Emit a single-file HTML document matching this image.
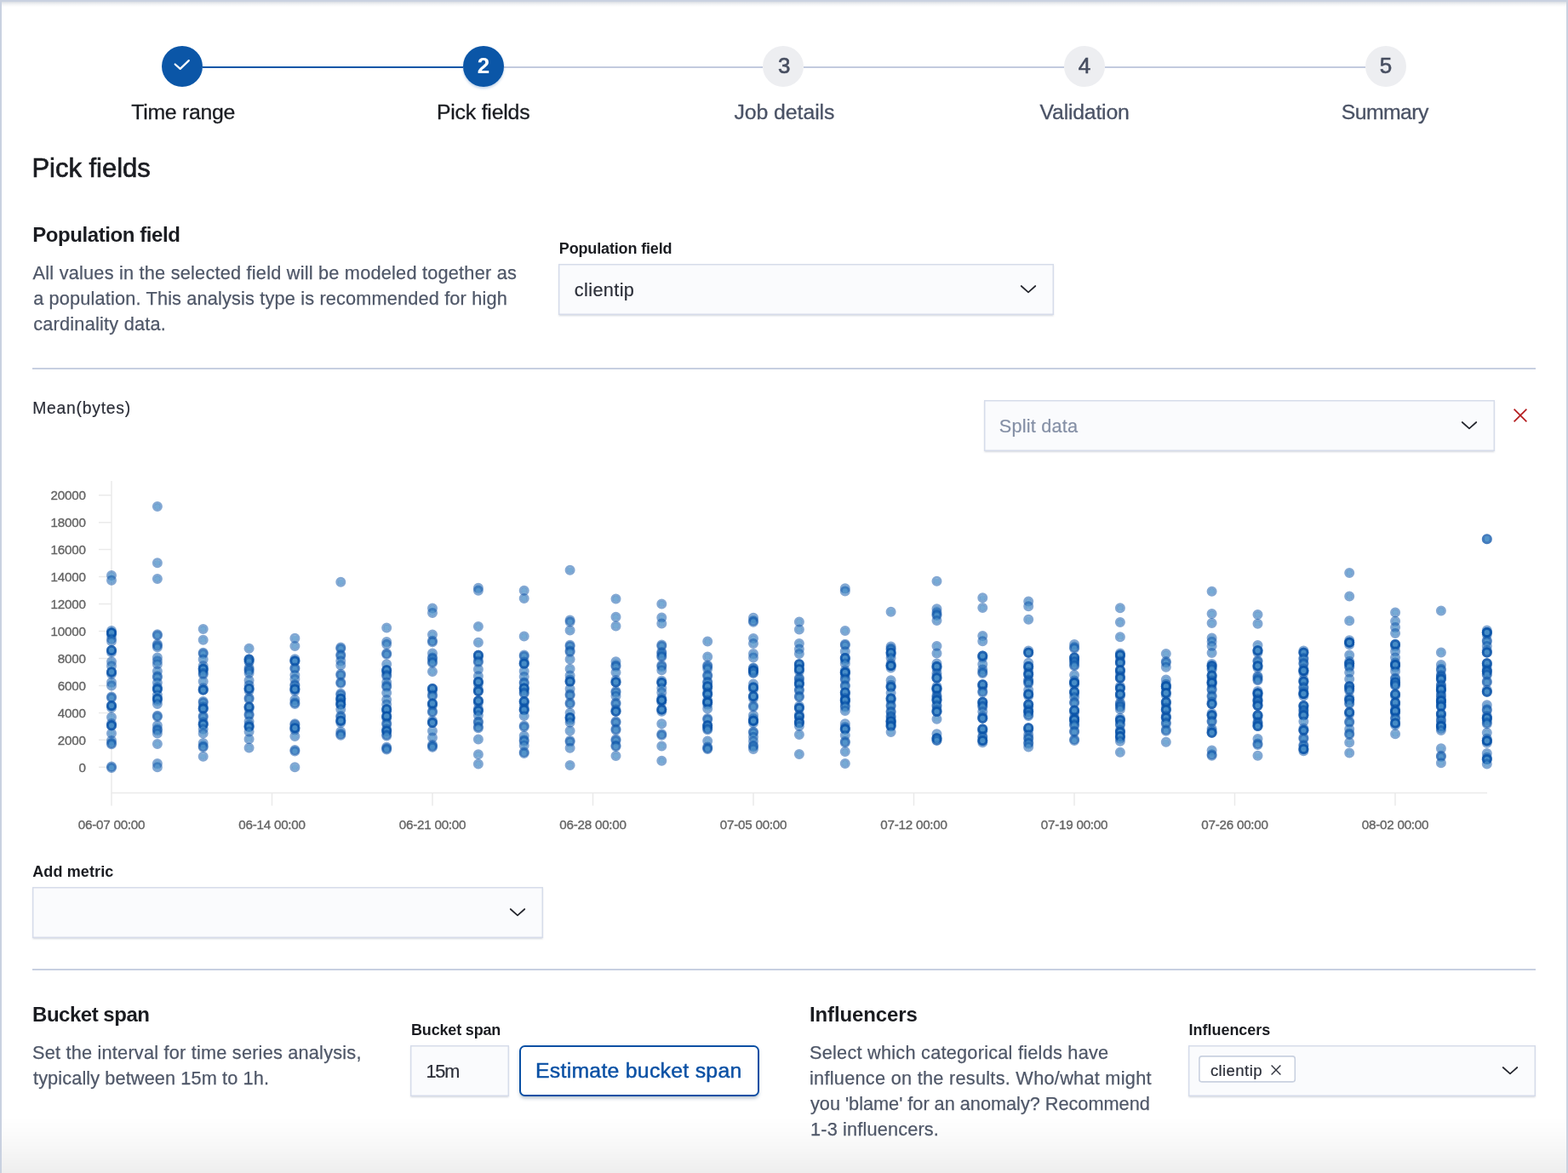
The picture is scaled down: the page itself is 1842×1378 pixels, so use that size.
<!DOCTYPE html>
<html lang="en"><head><meta charset="utf-8"><title>Pick fields</title><style>
html,body{margin:0;padding:0}
body{width:1842px;height:1378px;position:relative;overflow:hidden;background:#fff;font-family:"Liberation Sans",sans-serif;color:#1a1c21}
.t{position:absolute;white-space:nowrap;line-height:normal;margin:0;padding:0}
.abs{position:absolute}
.fld{position:absolute;box-sizing:border-box;background:#fafbfd;border:1px solid #d6dcea;box-shadow:inset 0 0 0 .45px #d6dcea,0 2px 2px -1px rgba(152,162,179,.3),0 1px 2px 0 rgba(152,162,179,.18)}
.hr{position:absolute;left:38px;width:1766px;height:2px;background:#c7cfe1}
.circ{position:absolute;width:48px;height:48px;border-radius:50%;top:54px}
.num{position:absolute;width:48px;text-align:center;top:0;line-height:46px;font-size:26px}
svg{position:absolute;overflow:visible}
</style></head><body><div id="root" style="position:absolute;left:0;top:0;width:1842px;height:1378px;will-change:transform">
<div class="abs" style="left:0;top:0;width:1842px;height:2px;background:#c9d1e0"></div>
<div class="abs" style="left:2px;top:2px;width:1838px;height:6px;background:linear-gradient(#d9dde3,#f1f2f4 45%,#fff)"></div>
<div class="abs" style="left:2px;top:1311px;width:1838px;height:67px;background:linear-gradient(rgba(0,0,0,0),rgba(0,0,0,.012) 25%,rgba(0,0,0,.03) 55%,rgba(0,0,0,.066))"></div>
<div class="abs" style="left:0;top:2px;width:2px;height:1376px;background:#c9d1e0"></div>
<div class="abs" style="left:1840px;top:2px;width:2px;height:1376px;background:#c9d1e0"></div>
<div class="abs" style="left:238px;top:78px;width:306px;height:2px;background:#0b56a7"></div>
<div class="abs" style="left:592px;top:78px;width:304px;height:2px;background:#c2cade"></div>
<div class="abs" style="left:944px;top:78px;width:306px;height:2px;background:#c2cade"></div>
<div class="abs" style="left:1298px;top:78px;width:306px;height:2px;background:#c2cade"></div>
<div class="circ" style="left:190px;background:#0b56a7"><svg width="48" height="48" style="left:0;top:0"><path d="M15.7 21.5 L21.7 26.9 L31.8 17.1" fill="none" stroke="#fff" stroke-width="2.2" stroke-linecap="round" stroke-linejoin="round"/></svg></div>
<div class="circ" style="left:544px;background:#0b56a7;box-shadow:0 2px 3px rgba(11,85,166,.25)"><div class="num" style="color:#fff;font-weight:700">2</div></div>
<div class="circ" style="left:896px;background:#edeef1"><div class="num" style="left:1.3px;color:#474e60;font-weight:400;-webkit-text-stroke:.6px #474e60">3</div></div>
<div class="circ" style="left:1250px;background:#edeef1"><div class="num" style="left:0px;color:#474e60;font-weight:400;-webkit-text-stroke:.6px #474e60">4</div></div>
<div class="circ" style="left:1604px;background:#edeef1"><div class="num" style="left:0px;color:#474e60;font-weight:400;-webkit-text-stroke:.6px #474e60">5</div></div>
<div class="fld" style="left:656px;top:310px;width:582px;height:60px"></div>
<svg width="20" height="12" style="left:1198.0px;top:334.0px"><path d="M1.7 2.0 L10 9.4 L18.3 2.0" fill="none" stroke="#23252d" stroke-width="1.7" stroke-linecap="round" stroke-linejoin="round"/></svg>
<div class="hr" style="top:432px"></div>
<div class="fld" style="left:1156px;top:470px;width:600px;height:60px"></div>
<svg width="20" height="12" style="left:1716.0px;top:494.0px"><path d="M1.7 2.0 L10 9.4 L18.3 2.0" fill="none" stroke="#23252d" stroke-width="1.7" stroke-linecap="round" stroke-linejoin="round"/></svg>
<svg width="18" height="18" style="left:1777px;top:479px"><path d="M1.6 1.6 L16.4 16.4 M16.4 1.6 L1.6 16.4" fill="none" stroke="#b3191b" stroke-width="1.6"/></svg>
<div class="fld" style="left:38px;top:1042px;width:600px;height:60px"></div>
<svg width="20" height="12" style="left:598.4px;top:1066.0px"><path d="M1.7 2.0 L10 9.4 L18.3 2.0" fill="none" stroke="#23252d" stroke-width="1.7" stroke-linecap="round" stroke-linejoin="round"/></svg>
<div class="hr" style="top:1138px"></div>
<div class="fld" style="left:482px;top:1228px;width:116px;height:60px"></div>
<div class="abs" style="box-sizing:border-box;left:610px;top:1228px;width:282px;height:60px;border:2px solid #0a50a4;border-radius:6.5px;background:#fff;box-shadow:0 3px 4px -1px rgba(60,90,120,.4)"></div>
<div class="fld" style="left:1396px;top:1228px;width:408px;height:60px"></div>
<svg width="116" height="34" style="left:1407px;top:1239px"><rect x="1.9" y="1.9" width="112.4" height="30" rx="3" fill="#fff" stroke="#c9d1e0" stroke-width="1.6"/></svg>
<svg width="14" height="14" style="left:1492px;top:1250px"><path d="M1.6 1.6 L12.4 12.4 M12.4 1.6 L1.6 12.4" fill="none" stroke="#343741" stroke-width="1.4"/></svg>
<svg width="20" height="12" style="left:1764.0px;top:1252.0px"><path d="M1.7 2.0 L10 9.4 L18.3 2.0" fill="none" stroke="#23252d" stroke-width="1.7" stroke-linecap="round" stroke-linejoin="round"/></svg>
<svg width="1842" height="1378" style="left:0;top:0" font-family="Liberation Sans, sans-serif" font-size="15.2" fill="#646464">
<defs><g id="d"><circle r="3.3" fill="#468cc6" fill-opacity=".74"/><circle r="4.55" fill="none" stroke="#0852a7" stroke-opacity=".5" stroke-width="2.9"/></g></defs>
<path d="M131 565 V931.5 H1747" fill="none" stroke="#eaeaea" stroke-width="1.5"/>
<path d="M116 901.3 H131 M116 869.34 H131 M116 837.38 H131 M116 805.42 H131 M116 773.46 H131 M116 741.5 H131 M116 709.54 H131 M116 677.58 H131 M116 645.62 H131 M116 613.66 H131 M116 581.7 H131 M131 931.5 V946.5 M319.5 931.5 V946.5 M508 931.5 V946.5 M696.5 931.5 V946.5 M885 931.5 V946.5 M1073.5 931.5 V946.5 M1262 931.5 V946.5 M1450.5 931.5 V946.5 M1639 931.5 V946.5" fill="none" stroke="#eaeaea" stroke-width="1.5"/>
<g stroke="#646464" stroke-width=".35" letter-spacing="-.22">
<text x="100.7" y="906.6" text-anchor="end">0</text>
<text x="100.7" y="874.64" text-anchor="end">2000</text>
<text x="100.7" y="842.68" text-anchor="end">4000</text>
<text x="100.7" y="810.72" text-anchor="end">6000</text>
<text x="100.7" y="778.76" text-anchor="end">8000</text>
<text x="100.7" y="746.8" text-anchor="end">10000</text>
<text x="100.7" y="714.84" text-anchor="end">12000</text>
<text x="100.7" y="682.88" text-anchor="end">14000</text>
<text x="100.7" y="650.92" text-anchor="end">16000</text>
<text x="100.7" y="618.96" text-anchor="end">18000</text>
<text x="100.7" y="587" text-anchor="end">20000</text>
<text x="131" y="974.3" text-anchor="middle">06-07 00:00</text>
<text x="319.5" y="974.3" text-anchor="middle">06-14 00:00</text>
<text x="508" y="974.3" text-anchor="middle">06-21 00:00</text>
<text x="696.5" y="974.3" text-anchor="middle">06-28 00:00</text>
<text x="885" y="974.3" text-anchor="middle">07-05 00:00</text>
<text x="1073.5" y="974.3" text-anchor="middle">07-12 00:00</text>
<text x="1262" y="974.3" text-anchor="middle">07-19 00:00</text>
<text x="1450.5" y="974.3" text-anchor="middle">07-26 00:00</text>
<text x="1639" y="974.3" text-anchor="middle">08-02 00:00</text>
</g>
<use href="#d" x="131.0" y="675.9"/>
<use href="#d" x="131.0" y="681.7"/>
<use href="#d" x="131.0" y="740.9"/>
<use href="#d" x="131.0" y="745.9"/>
<use href="#d" x="131.0" y="743.4"/>
<use href="#d" x="131.0" y="743.4"/>
<use href="#d" x="131.0" y="743.4"/>
<use href="#d" x="131.0" y="743.4"/>
<use href="#d" x="131.0" y="750.4"/>
<use href="#d" x="131.0" y="753.3"/>
<use href="#d" x="131.0" y="766.2"/>
<use href="#d" x="131.0" y="763.9"/>
<use href="#d" x="131.0" y="763.9"/>
<use href="#d" x="131.0" y="763.9"/>
<use href="#d" x="131.0" y="777.3"/>
<use href="#d" x="131.0" y="782.3"/>
<use href="#d" x="131.0" y="791.7"/>
<use href="#d" x="131.0" y="789.4"/>
<use href="#d" x="131.0" y="789.4"/>
<use href="#d" x="131.0" y="789.4"/>
<use href="#d" x="131.0" y="801.4"/>
<use href="#d" x="131.0" y="805.6"/>
<use href="#d" x="131.0" y="818.4"/>
<use href="#d" x="131.0" y="819.8"/>
<use href="#d" x="131.0" y="831.3"/>
<use href="#d" x="131.0" y="829.0"/>
<use href="#d" x="131.0" y="829.0"/>
<use href="#d" x="131.0" y="829.0"/>
<use href="#d" x="131.0" y="842.4"/>
<use href="#d" x="131.0" y="850.0"/>
<use href="#d" x="131.0" y="852.3"/>
<use href="#d" x="131.0" y="852.3"/>
<use href="#d" x="131.0" y="852.3"/>
<use href="#d" x="131.0" y="861.5"/>
<use href="#d" x="131.0" y="870.0"/>
<use href="#d" x="131.0" y="872.9"/>
<use href="#d" x="131.0" y="874.3"/>
<use href="#d" x="131.0" y="900.5"/>
<use href="#d" x="131.0" y="901.9"/>
<use href="#d" x="184.9" y="595.0"/>
<use href="#d" x="184.9" y="661.2"/>
<use href="#d" x="184.9" y="680.0"/>
<use href="#d" x="184.9" y="745.2"/>
<use href="#d" x="184.9" y="746.6"/>
<use href="#d" x="184.9" y="756.8"/>
<use href="#d" x="184.9" y="758.2"/>
<use href="#d" x="184.9" y="760.3"/>
<use href="#d" x="184.9" y="772.4"/>
<use href="#d" x="184.9" y="776.6"/>
<use href="#d" x="184.9" y="780.2"/>
<use href="#d" x="184.9" y="788.6"/>
<use href="#d" x="184.9" y="794.3"/>
<use href="#d" x="184.9" y="795.7"/>
<use href="#d" x="184.9" y="802.1"/>
<use href="#d" x="184.9" y="807.2"/>
<use href="#d" x="184.9" y="809.5"/>
<use href="#d" x="184.9" y="809.5"/>
<use href="#d" x="184.9" y="809.5"/>
<use href="#d" x="184.9" y="816.2"/>
<use href="#d" x="184.9" y="823.1"/>
<use href="#d" x="184.9" y="820.8"/>
<use href="#d" x="184.9" y="820.8"/>
<use href="#d" x="184.9" y="820.8"/>
<use href="#d" x="184.9" y="826.9"/>
<use href="#d" x="184.9" y="840.7"/>
<use href="#d" x="184.9" y="842.1"/>
<use href="#d" x="184.9" y="852.3"/>
<use href="#d" x="184.9" y="856.6"/>
<use href="#d" x="184.9" y="858.0"/>
<use href="#d" x="184.9" y="861.5"/>
<use href="#d" x="184.9" y="873.9"/>
<use href="#d" x="184.9" y="896.9"/>
<use href="#d" x="184.9" y="901.2"/>
<use href="#d" x="238.7" y="739.1"/>
<use href="#d" x="238.7" y="751.8"/>
<use href="#d" x="238.7" y="766.7"/>
<use href="#d" x="238.7" y="768.1"/>
<use href="#d" x="238.7" y="774.5"/>
<use href="#d" x="238.7" y="782.3"/>
<use href="#d" x="238.7" y="788.1"/>
<use href="#d" x="238.7" y="785.8"/>
<use href="#d" x="238.7" y="785.8"/>
<use href="#d" x="238.7" y="785.8"/>
<use href="#d" x="238.7" y="790.8"/>
<use href="#d" x="238.7" y="792.2"/>
<use href="#d" x="238.7" y="800.4"/>
<use href="#d" x="238.7" y="808.3"/>
<use href="#d" x="238.7" y="810.6"/>
<use href="#d" x="238.7" y="810.6"/>
<use href="#d" x="238.7" y="810.6"/>
<use href="#d" x="238.7" y="824.0"/>
<use href="#d" x="238.7" y="825.4"/>
<use href="#d" x="238.7" y="830.2"/>
<use href="#d" x="238.7" y="832.5"/>
<use href="#d" x="238.7" y="832.5"/>
<use href="#d" x="238.7" y="832.5"/>
<use href="#d" x="238.7" y="841.0"/>
<use href="#d" x="238.7" y="842.4"/>
<use href="#d" x="238.7" y="848.6"/>
<use href="#d" x="238.7" y="850.9"/>
<use href="#d" x="238.7" y="850.9"/>
<use href="#d" x="238.7" y="850.9"/>
<use href="#d" x="238.7" y="856.6"/>
<use href="#d" x="238.7" y="861.5"/>
<use href="#d" x="238.7" y="872.9"/>
<use href="#d" x="238.7" y="876.4"/>
<use href="#d" x="238.7" y="877.8"/>
<use href="#d" x="238.7" y="888.7"/>
<use href="#d" x="292.6" y="761.8"/>
<use href="#d" x="292.6" y="776.8"/>
<use href="#d" x="292.6" y="774.5"/>
<use href="#d" x="292.6" y="774.5"/>
<use href="#d" x="292.6" y="774.5"/>
<use href="#d" x="292.6" y="777.3"/>
<use href="#d" x="292.6" y="784.4"/>
<use href="#d" x="292.6" y="786.5"/>
<use href="#d" x="292.6" y="787.9"/>
<use href="#d" x="292.6" y="790.8"/>
<use href="#d" x="292.6" y="799.3"/>
<use href="#d" x="292.6" y="804.9"/>
<use href="#d" x="292.6" y="811.2"/>
<use href="#d" x="292.6" y="808.9"/>
<use href="#d" x="292.6" y="808.9"/>
<use href="#d" x="292.6" y="808.9"/>
<use href="#d" x="292.6" y="819.8"/>
<use href="#d" x="292.6" y="821.2"/>
<use href="#d" x="292.6" y="832.7"/>
<use href="#d" x="292.6" y="830.4"/>
<use href="#d" x="292.6" y="830.4"/>
<use href="#d" x="292.6" y="830.4"/>
<use href="#d" x="292.6" y="838.9"/>
<use href="#d" x="292.6" y="840.3"/>
<use href="#d" x="292.6" y="847.4"/>
<use href="#d" x="292.6" y="851.5"/>
<use href="#d" x="292.6" y="853.8"/>
<use href="#d" x="292.6" y="853.8"/>
<use href="#d" x="292.6" y="853.8"/>
<use href="#d" x="292.6" y="859.4"/>
<use href="#d" x="292.6" y="868.3"/>
<use href="#d" x="292.6" y="878.5"/>
<use href="#d" x="346.4" y="749.7"/>
<use href="#d" x="346.4" y="758.9"/>
<use href="#d" x="346.4" y="774.3"/>
<use href="#d" x="346.4" y="776.6"/>
<use href="#d" x="346.4" y="776.6"/>
<use href="#d" x="346.4" y="776.6"/>
<use href="#d" x="346.4" y="784.4"/>
<use href="#d" x="346.4" y="785.8"/>
<use href="#d" x="346.4" y="792.9"/>
<use href="#d" x="346.4" y="797.8"/>
<use href="#d" x="346.4" y="804.2"/>
<use href="#d" x="346.4" y="805.6"/>
<use href="#d" x="346.4" y="811.8"/>
<use href="#d" x="346.4" y="809.5"/>
<use href="#d" x="346.4" y="809.5"/>
<use href="#d" x="346.4" y="809.5"/>
<use href="#d" x="346.4" y="821.9"/>
<use href="#d" x="346.4" y="825.5"/>
<use href="#d" x="346.4" y="826.9"/>
<use href="#d" x="346.4" y="850.2"/>
<use href="#d" x="346.4" y="851.6"/>
<use href="#d" x="346.4" y="857.5"/>
<use href="#d" x="346.4" y="855.2"/>
<use href="#d" x="346.4" y="855.2"/>
<use href="#d" x="346.4" y="855.2"/>
<use href="#d" x="346.4" y="865.1"/>
<use href="#d" x="346.4" y="881.1"/>
<use href="#d" x="346.4" y="882.5"/>
<use href="#d" x="346.4" y="901.2"/>
<use href="#d" x="400.3" y="683.7"/>
<use href="#d" x="400.3" y="760.6"/>
<use href="#d" x="400.3" y="762.0"/>
<use href="#d" x="400.3" y="769.1"/>
<use href="#d" x="400.3" y="770.5"/>
<use href="#d" x="400.3" y="776.6"/>
<use href="#d" x="400.3" y="781.6"/>
<use href="#d" x="400.3" y="791.8"/>
<use href="#d" x="400.3" y="793.2"/>
<use href="#d" x="400.3" y="801.4"/>
<use href="#d" x="400.3" y="802.8"/>
<use href="#d" x="400.3" y="814.8"/>
<use href="#d" x="400.3" y="816.2"/>
<use href="#d" x="400.3" y="823.1"/>
<use href="#d" x="400.3" y="820.8"/>
<use href="#d" x="400.3" y="820.8"/>
<use href="#d" x="400.3" y="820.8"/>
<use href="#d" x="400.3" y="825.3"/>
<use href="#d" x="400.3" y="827.6"/>
<use href="#d" x="400.3" y="827.6"/>
<use href="#d" x="400.3" y="827.6"/>
<use href="#d" x="400.3" y="833.2"/>
<use href="#d" x="400.3" y="841.0"/>
<use href="#d" x="400.3" y="842.4"/>
<use href="#d" x="400.3" y="849.0"/>
<use href="#d" x="400.3" y="846.7"/>
<use href="#d" x="400.3" y="846.7"/>
<use href="#d" x="400.3" y="846.7"/>
<use href="#d" x="400.3" y="859.4"/>
<use href="#d" x="400.3" y="862.3"/>
<use href="#d" x="400.3" y="863.7"/>
<use href="#d" x="454.2" y="737.4"/>
<use href="#d" x="454.2" y="754.0"/>
<use href="#d" x="454.2" y="757.1"/>
<use href="#d" x="454.2" y="767.4"/>
<use href="#d" x="454.2" y="768.8"/>
<use href="#d" x="454.2" y="780.2"/>
<use href="#d" x="454.2" y="789.5"/>
<use href="#d" x="454.2" y="787.2"/>
<use href="#d" x="454.2" y="787.2"/>
<use href="#d" x="454.2" y="787.2"/>
<use href="#d" x="454.2" y="792.9"/>
<use href="#d" x="454.2" y="794.3"/>
<use href="#d" x="454.2" y="801.4"/>
<use href="#d" x="454.2" y="805.6"/>
<use href="#d" x="454.2" y="807.0"/>
<use href="#d" x="454.2" y="814.1"/>
<use href="#d" x="454.2" y="821.9"/>
<use href="#d" x="454.2" y="827.6"/>
<use href="#d" x="454.2" y="835.5"/>
<use href="#d" x="454.2" y="833.2"/>
<use href="#d" x="454.2" y="833.2"/>
<use href="#d" x="454.2" y="833.2"/>
<use href="#d" x="454.2" y="843.7"/>
<use href="#d" x="454.2" y="841.4"/>
<use href="#d" x="454.2" y="841.4"/>
<use href="#d" x="454.2" y="841.4"/>
<use href="#d" x="454.2" y="849.5"/>
<use href="#d" x="454.2" y="850.9"/>
<use href="#d" x="454.2" y="856.4"/>
<use href="#d" x="454.2" y="858.7"/>
<use href="#d" x="454.2" y="858.7"/>
<use href="#d" x="454.2" y="858.7"/>
<use href="#d" x="454.2" y="863.0"/>
<use href="#d" x="454.2" y="864.4"/>
<use href="#d" x="454.2" y="877.8"/>
<use href="#d" x="454.2" y="879.2"/>
<use href="#d" x="454.2" y="880.6"/>
<use href="#d" x="508.0" y="714.6"/>
<use href="#d" x="508.0" y="720.0"/>
<use href="#d" x="508.0" y="745.5"/>
<use href="#d" x="508.0" y="752.8"/>
<use href="#d" x="508.0" y="754.2"/>
<use href="#d" x="508.0" y="767.4"/>
<use href="#d" x="508.0" y="772.4"/>
<use href="#d" x="508.0" y="773.8"/>
<use href="#d" x="508.0" y="777.3"/>
<use href="#d" x="508.0" y="778.7"/>
<use href="#d" x="508.0" y="788.9"/>
<use href="#d" x="508.0" y="811.2"/>
<use href="#d" x="508.0" y="808.9"/>
<use href="#d" x="508.0" y="808.9"/>
<use href="#d" x="508.0" y="808.9"/>
<use href="#d" x="508.0" y="816.3"/>
<use href="#d" x="508.0" y="817.7"/>
<use href="#d" x="508.0" y="828.7"/>
<use href="#d" x="508.0" y="826.4"/>
<use href="#d" x="508.0" y="826.4"/>
<use href="#d" x="508.0" y="826.4"/>
<use href="#d" x="508.0" y="835.4"/>
<use href="#d" x="508.0" y="836.8"/>
<use href="#d" x="508.0" y="846.8"/>
<use href="#d" x="508.0" y="849.1"/>
<use href="#d" x="508.0" y="849.1"/>
<use href="#d" x="508.0" y="849.1"/>
<use href="#d" x="508.0" y="858.7"/>
<use href="#d" x="508.0" y="866.5"/>
<use href="#d" x="508.0" y="875.0"/>
<use href="#d" x="508.0" y="876.4"/>
<use href="#d" x="508.0" y="877.8"/>
<use href="#d" x="561.9" y="690.8"/>
<use href="#d" x="561.9" y="693.8"/>
<use href="#d" x="561.9" y="735.9"/>
<use href="#d" x="561.9" y="754.7"/>
<use href="#d" x="561.9" y="772.1"/>
<use href="#d" x="561.9" y="769.8"/>
<use href="#d" x="561.9" y="769.8"/>
<use href="#d" x="561.9" y="769.8"/>
<use href="#d" x="561.9" y="776.6"/>
<use href="#d" x="561.9" y="778.0"/>
<use href="#d" x="561.9" y="786.2"/>
<use href="#d" x="561.9" y="794.3"/>
<use href="#d" x="561.9" y="803.3"/>
<use href="#d" x="561.9" y="801.0"/>
<use href="#d" x="561.9" y="801.0"/>
<use href="#d" x="561.9" y="801.0"/>
<use href="#d" x="561.9" y="809.7"/>
<use href="#d" x="561.9" y="812.0"/>
<use href="#d" x="561.9" y="812.0"/>
<use href="#d" x="561.9" y="812.0"/>
<use href="#d" x="561.9" y="825.6"/>
<use href="#d" x="561.9" y="823.3"/>
<use href="#d" x="561.9" y="823.3"/>
<use href="#d" x="561.9" y="823.3"/>
<use href="#d" x="561.9" y="832.6"/>
<use href="#d" x="561.9" y="834.9"/>
<use href="#d" x="561.9" y="834.9"/>
<use href="#d" x="561.9" y="834.9"/>
<use href="#d" x="561.9" y="840.3"/>
<use href="#d" x="561.9" y="847.4"/>
<use href="#d" x="561.9" y="848.8"/>
<use href="#d" x="561.9" y="853.8"/>
<use href="#d" x="561.9" y="855.2"/>
<use href="#d" x="561.9" y="868.6"/>
<use href="#d" x="561.9" y="886.3"/>
<use href="#d" x="561.9" y="897.6"/>
<use href="#d" x="615.7" y="693.8"/>
<use href="#d" x="615.7" y="702.9"/>
<use href="#d" x="615.7" y="747.6"/>
<use href="#d" x="615.7" y="769.5"/>
<use href="#d" x="615.7" y="770.9"/>
<use href="#d" x="615.7" y="777.4"/>
<use href="#d" x="615.7" y="779.7"/>
<use href="#d" x="615.7" y="779.7"/>
<use href="#d" x="615.7" y="779.7"/>
<use href="#d" x="615.7" y="788.6"/>
<use href="#d" x="615.7" y="795.0"/>
<use href="#d" x="615.7" y="801.4"/>
<use href="#d" x="615.7" y="802.8"/>
<use href="#d" x="615.7" y="810.8"/>
<use href="#d" x="615.7" y="808.5"/>
<use href="#d" x="615.7" y="808.5"/>
<use href="#d" x="615.7" y="808.5"/>
<use href="#d" x="615.7" y="813.4"/>
<use href="#d" x="615.7" y="814.8"/>
<use href="#d" x="615.7" y="826.3"/>
<use href="#d" x="615.7" y="824.0"/>
<use href="#d" x="615.7" y="824.0"/>
<use href="#d" x="615.7" y="824.0"/>
<use href="#d" x="615.7" y="831.6"/>
<use href="#d" x="615.7" y="833.9"/>
<use href="#d" x="615.7" y="833.9"/>
<use href="#d" x="615.7" y="833.9"/>
<use href="#d" x="615.7" y="841.0"/>
<use href="#d" x="615.7" y="852.6"/>
<use href="#d" x="615.7" y="854.0"/>
<use href="#d" x="615.7" y="864.4"/>
<use href="#d" x="615.7" y="869.3"/>
<use href="#d" x="615.7" y="870.7"/>
<use href="#d" x="615.7" y="875.7"/>
<use href="#d" x="615.7" y="883.5"/>
<use href="#d" x="615.7" y="884.9"/>
<use href="#d" x="669.6" y="669.7"/>
<use href="#d" x="669.6" y="728.6"/>
<use href="#d" x="669.6" y="730.6"/>
<use href="#d" x="669.6" y="740.6"/>
<use href="#d" x="669.6" y="757.8"/>
<use href="#d" x="669.6" y="759.2"/>
<use href="#d" x="669.6" y="764.6"/>
<use href="#d" x="669.6" y="766.0"/>
<use href="#d" x="669.6" y="774.5"/>
<use href="#d" x="669.6" y="785.8"/>
<use href="#d" x="669.6" y="793.6"/>
<use href="#d" x="669.6" y="798.4"/>
<use href="#d" x="669.6" y="800.7"/>
<use href="#d" x="669.6" y="800.7"/>
<use href="#d" x="669.6" y="800.7"/>
<use href="#d" x="669.6" y="809.2"/>
<use href="#d" x="669.6" y="815.5"/>
<use href="#d" x="669.6" y="816.9"/>
<use href="#d" x="669.6" y="825.5"/>
<use href="#d" x="669.6" y="826.9"/>
<use href="#d" x="669.6" y="837.5"/>
<use href="#d" x="669.6" y="845.4"/>
<use href="#d" x="669.6" y="843.1"/>
<use href="#d" x="669.6" y="843.1"/>
<use href="#d" x="669.6" y="843.1"/>
<use href="#d" x="669.6" y="848.8"/>
<use href="#d" x="669.6" y="858.4"/>
<use href="#d" x="669.6" y="870.0"/>
<use href="#d" x="669.6" y="871.4"/>
<use href="#d" x="669.6" y="878.8"/>
<use href="#d" x="669.6" y="899.0"/>
<use href="#d" x="723.5" y="703.6"/>
<use href="#d" x="723.5" y="724.8"/>
<use href="#d" x="723.5" y="735.4"/>
<use href="#d" x="723.5" y="777.3"/>
<use href="#d" x="723.5" y="781.6"/>
<use href="#d" x="723.5" y="783.0"/>
<use href="#d" x="723.5" y="790.0"/>
<use href="#d" x="723.5" y="799.1"/>
<use href="#d" x="723.5" y="801.4"/>
<use href="#d" x="723.5" y="801.4"/>
<use href="#d" x="723.5" y="801.4"/>
<use href="#d" x="723.5" y="812.0"/>
<use href="#d" x="723.5" y="813.4"/>
<use href="#d" x="723.5" y="817.7"/>
<use href="#d" x="723.5" y="825.5"/>
<use href="#d" x="723.5" y="826.9"/>
<use href="#d" x="723.5" y="833.5"/>
<use href="#d" x="723.5" y="835.8"/>
<use href="#d" x="723.5" y="835.8"/>
<use href="#d" x="723.5" y="835.8"/>
<use href="#d" x="723.5" y="847.4"/>
<use href="#d" x="723.5" y="848.8"/>
<use href="#d" x="723.5" y="856.3"/>
<use href="#d" x="723.5" y="857.7"/>
<use href="#d" x="723.5" y="868.6"/>
<use href="#d" x="723.5" y="870.0"/>
<use href="#d" x="723.5" y="875.7"/>
<use href="#d" x="723.5" y="877.1"/>
<use href="#d" x="723.5" y="888.0"/>
<use href="#d" x="777.3" y="709.4"/>
<use href="#d" x="777.3" y="725.4"/>
<use href="#d" x="777.3" y="732.6"/>
<use href="#d" x="777.3" y="757.5"/>
<use href="#d" x="777.3" y="758.9"/>
<use href="#d" x="777.3" y="766.0"/>
<use href="#d" x="777.3" y="767.4"/>
<use href="#d" x="777.3" y="770.3"/>
<use href="#d" x="777.3" y="771.7"/>
<use href="#d" x="777.3" y="781.6"/>
<use href="#d" x="777.3" y="783.0"/>
<use href="#d" x="777.3" y="787.2"/>
<use href="#d" x="777.3" y="799.8"/>
<use href="#d" x="777.3" y="802.1"/>
<use href="#d" x="777.3" y="802.1"/>
<use href="#d" x="777.3" y="802.1"/>
<use href="#d" x="777.3" y="808.5"/>
<use href="#d" x="777.3" y="813.4"/>
<use href="#d" x="777.3" y="820.1"/>
<use href="#d" x="777.3" y="825.1"/>
<use href="#d" x="777.3" y="822.6"/>
<use href="#d" x="777.3" y="822.6"/>
<use href="#d" x="777.3" y="822.6"/>
<use href="#d" x="777.3" y="822.6"/>
<use href="#d" x="777.3" y="835.8"/>
<use href="#d" x="777.3" y="833.5"/>
<use href="#d" x="777.3" y="833.5"/>
<use href="#d" x="777.3" y="833.5"/>
<use href="#d" x="777.3" y="850.2"/>
<use href="#d" x="777.3" y="862.3"/>
<use href="#d" x="777.3" y="863.7"/>
<use href="#d" x="777.3" y="876.4"/>
<use href="#d" x="777.3" y="893.8"/>
<use href="#d" x="831.2" y="753.6"/>
<use href="#d" x="831.2" y="771.4"/>
<use href="#d" x="831.2" y="781.6"/>
<use href="#d" x="831.2" y="783.0"/>
<use href="#d" x="831.2" y="785.8"/>
<use href="#d" x="831.2" y="792.9"/>
<use href="#d" x="831.2" y="794.3"/>
<use href="#d" x="831.2" y="800.7"/>
<use href="#d" x="831.2" y="802.1"/>
<use href="#d" x="831.2" y="808.6"/>
<use href="#d" x="831.2" y="806.3"/>
<use href="#d" x="831.2" y="806.3"/>
<use href="#d" x="831.2" y="806.3"/>
<use href="#d" x="831.2" y="813.2"/>
<use href="#d" x="831.2" y="815.5"/>
<use href="#d" x="831.2" y="815.5"/>
<use href="#d" x="831.2" y="815.5"/>
<use href="#d" x="831.2" y="822.5"/>
<use href="#d" x="831.2" y="827.5"/>
<use href="#d" x="831.2" y="825.0"/>
<use href="#d" x="831.2" y="825.0"/>
<use href="#d" x="831.2" y="825.0"/>
<use href="#d" x="831.2" y="825.0"/>
<use href="#d" x="831.2" y="832.5"/>
<use href="#d" x="831.2" y="843.9"/>
<use href="#d" x="831.2" y="845.3"/>
<use href="#d" x="831.2" y="854.6"/>
<use href="#d" x="831.2" y="852.3"/>
<use href="#d" x="831.2" y="852.3"/>
<use href="#d" x="831.2" y="852.3"/>
<use href="#d" x="831.2" y="855.9"/>
<use href="#d" x="831.2" y="857.3"/>
<use href="#d" x="831.2" y="870.5"/>
<use href="#d" x="831.2" y="877.5"/>
<use href="#d" x="831.2" y="878.9"/>
<use href="#d" x="831.2" y="879.9"/>
<use href="#d" x="885.0" y="725.7"/>
<use href="#d" x="885.0" y="729.3"/>
<use href="#d" x="885.0" y="730.7"/>
<use href="#d" x="885.0" y="750.0"/>
<use href="#d" x="885.0" y="756.0"/>
<use href="#d" x="885.0" y="768.1"/>
<use href="#d" x="885.0" y="772.4"/>
<use href="#d" x="885.0" y="784.4"/>
<use href="#d" x="885.0" y="785.2"/>
<use href="#d" x="885.0" y="790.2"/>
<use href="#d" x="885.0" y="787.7"/>
<use href="#d" x="885.0" y="787.7"/>
<use href="#d" x="885.0" y="787.7"/>
<use href="#d" x="885.0" y="787.7"/>
<use href="#d" x="885.0" y="790.8"/>
<use href="#d" x="885.0" y="803.5"/>
<use href="#d" x="885.0" y="809.8"/>
<use href="#d" x="885.0" y="807.5"/>
<use href="#d" x="885.0" y="807.5"/>
<use href="#d" x="885.0" y="807.5"/>
<use href="#d" x="885.0" y="820.2"/>
<use href="#d" x="885.0" y="817.9"/>
<use href="#d" x="885.0" y="817.9"/>
<use href="#d" x="885.0" y="817.9"/>
<use href="#d" x="885.0" y="829.0"/>
<use href="#d" x="885.0" y="830.4"/>
<use href="#d" x="885.0" y="840.3"/>
<use href="#d" x="885.0" y="844.2"/>
<use href="#d" x="885.0" y="849.2"/>
<use href="#d" x="885.0" y="846.7"/>
<use href="#d" x="885.0" y="846.7"/>
<use href="#d" x="885.0" y="846.7"/>
<use href="#d" x="885.0" y="846.7"/>
<use href="#d" x="885.0" y="859.4"/>
<use href="#d" x="885.0" y="860.8"/>
<use href="#d" x="885.0" y="865.8"/>
<use href="#d" x="885.0" y="870.7"/>
<use href="#d" x="885.0" y="875.7"/>
<use href="#d" x="885.0" y="877.1"/>
<use href="#d" x="885.0" y="879.9"/>
<use href="#d" x="938.9" y="730.5"/>
<use href="#d" x="938.9" y="739.6"/>
<use href="#d" x="938.9" y="756.0"/>
<use href="#d" x="938.9" y="762.5"/>
<use href="#d" x="938.9" y="768.1"/>
<use href="#d" x="938.9" y="782.5"/>
<use href="#d" x="938.9" y="780.2"/>
<use href="#d" x="938.9" y="780.2"/>
<use href="#d" x="938.9" y="780.2"/>
<use href="#d" x="938.9" y="788.5"/>
<use href="#d" x="938.9" y="786.2"/>
<use href="#d" x="938.9" y="786.2"/>
<use href="#d" x="938.9" y="786.2"/>
<use href="#d" x="938.9" y="796.4"/>
<use href="#d" x="938.9" y="797.8"/>
<use href="#d" x="938.9" y="801.2"/>
<use href="#d" x="938.9" y="803.5"/>
<use href="#d" x="938.9" y="803.5"/>
<use href="#d" x="938.9" y="803.5"/>
<use href="#d" x="938.9" y="809.9"/>
<use href="#d" x="938.9" y="811.3"/>
<use href="#d" x="938.9" y="817.7"/>
<use href="#d" x="938.9" y="819.1"/>
<use href="#d" x="938.9" y="829.5"/>
<use href="#d" x="938.9" y="831.8"/>
<use href="#d" x="938.9" y="831.8"/>
<use href="#d" x="938.9" y="831.8"/>
<use href="#d" x="938.9" y="839.4"/>
<use href="#d" x="938.9" y="841.7"/>
<use href="#d" x="938.9" y="841.7"/>
<use href="#d" x="938.9" y="841.7"/>
<use href="#d" x="938.9" y="846.8"/>
<use href="#d" x="938.9" y="849.1"/>
<use href="#d" x="938.9" y="849.1"/>
<use href="#d" x="938.9" y="849.1"/>
<use href="#d" x="938.9" y="853.0"/>
<use href="#d" x="938.9" y="863.0"/>
<use href="#d" x="938.9" y="885.9"/>
<use href="#d" x="992.8" y="691.2"/>
<use href="#d" x="992.8" y="694.4"/>
<use href="#d" x="992.8" y="741.1"/>
<use href="#d" x="992.8" y="756.7"/>
<use href="#d" x="992.8" y="758.1"/>
<use href="#d" x="992.8" y="765.3"/>
<use href="#d" x="992.8" y="775.4"/>
<use href="#d" x="992.8" y="773.1"/>
<use href="#d" x="992.8" y="773.1"/>
<use href="#d" x="992.8" y="773.1"/>
<use href="#d" x="992.8" y="779.4"/>
<use href="#d" x="992.8" y="787.6"/>
<use href="#d" x="992.8" y="792.6"/>
<use href="#d" x="992.8" y="790.1"/>
<use href="#d" x="992.8" y="790.1"/>
<use href="#d" x="992.8" y="790.1"/>
<use href="#d" x="992.8" y="790.1"/>
<use href="#d" x="992.8" y="797.1"/>
<use href="#d" x="992.8" y="798.5"/>
<use href="#d" x="992.8" y="804.9"/>
<use href="#d" x="992.8" y="806.3"/>
<use href="#d" x="992.8" y="815.7"/>
<use href="#d" x="992.8" y="813.4"/>
<use href="#d" x="992.8" y="813.4"/>
<use href="#d" x="992.8" y="813.4"/>
<use href="#d" x="992.8" y="820.1"/>
<use href="#d" x="992.8" y="825.1"/>
<use href="#d" x="992.8" y="822.6"/>
<use href="#d" x="992.8" y="822.6"/>
<use href="#d" x="992.8" y="822.6"/>
<use href="#d" x="992.8" y="822.6"/>
<use href="#d" x="992.8" y="829.0"/>
<use href="#d" x="992.8" y="830.4"/>
<use href="#d" x="992.8" y="834.9"/>
<use href="#d" x="992.8" y="850.2"/>
<use href="#d" x="992.8" y="854.3"/>
<use href="#d" x="992.8" y="856.6"/>
<use href="#d" x="992.8" y="856.6"/>
<use href="#d" x="992.8" y="856.6"/>
<use href="#d" x="992.8" y="863.7"/>
<use href="#d" x="992.8" y="871.0"/>
<use href="#d" x="992.8" y="872.4"/>
<use href="#d" x="992.8" y="883.1"/>
<use href="#d" x="992.8" y="896.9"/>
<use href="#d" x="1046.6" y="718.7"/>
<use href="#d" x="1046.6" y="759.6"/>
<use href="#d" x="1046.6" y="761.8"/>
<use href="#d" x="1046.6" y="763.2"/>
<use href="#d" x="1046.6" y="769.0"/>
<use href="#d" x="1046.6" y="766.7"/>
<use href="#d" x="1046.6" y="766.7"/>
<use href="#d" x="1046.6" y="766.7"/>
<use href="#d" x="1046.6" y="773.1"/>
<use href="#d" x="1046.6" y="779.5"/>
<use href="#d" x="1046.6" y="784.5"/>
<use href="#d" x="1046.6" y="782.0"/>
<use href="#d" x="1046.6" y="782.0"/>
<use href="#d" x="1046.6" y="782.0"/>
<use href="#d" x="1046.6" y="782.0"/>
<use href="#d" x="1046.6" y="799.3"/>
<use href="#d" x="1046.6" y="804.7"/>
<use href="#d" x="1046.6" y="807.0"/>
<use href="#d" x="1046.6" y="807.0"/>
<use href="#d" x="1046.6" y="807.0"/>
<use href="#d" x="1046.6" y="814.1"/>
<use href="#d" x="1046.6" y="822.8"/>
<use href="#d" x="1046.6" y="820.5"/>
<use href="#d" x="1046.6" y="820.5"/>
<use href="#d" x="1046.6" y="820.5"/>
<use href="#d" x="1046.6" y="828.3"/>
<use href="#d" x="1046.6" y="829.7"/>
<use href="#d" x="1046.6" y="835.4"/>
<use href="#d" x="1046.6" y="836.8"/>
<use href="#d" x="1046.6" y="841.0"/>
<use href="#d" x="1046.6" y="842.4"/>
<use href="#d" x="1046.6" y="844.9"/>
<use href="#d" x="1046.6" y="849.9"/>
<use href="#d" x="1046.6" y="847.4"/>
<use href="#d" x="1046.6" y="847.4"/>
<use href="#d" x="1046.6" y="847.4"/>
<use href="#d" x="1046.6" y="847.4"/>
<use href="#d" x="1046.6" y="850.7"/>
<use href="#d" x="1046.6" y="853.0"/>
<use href="#d" x="1046.6" y="853.0"/>
<use href="#d" x="1046.6" y="853.0"/>
<use href="#d" x="1046.6" y="860.1"/>
<use href="#d" x="1100.5" y="682.7"/>
<use href="#d" x="1100.5" y="715.3"/>
<use href="#d" x="1100.5" y="719.2"/>
<use href="#d" x="1100.5" y="721.7"/>
<use href="#d" x="1100.5" y="723.1"/>
<use href="#d" x="1100.5" y="729.1"/>
<use href="#d" x="1100.5" y="759.1"/>
<use href="#d" x="1100.5" y="767.4"/>
<use href="#d" x="1100.5" y="779.4"/>
<use href="#d" x="1100.5" y="785.3"/>
<use href="#d" x="1100.5" y="783.0"/>
<use href="#d" x="1100.5" y="783.0"/>
<use href="#d" x="1100.5" y="783.0"/>
<use href="#d" x="1100.5" y="790.8"/>
<use href="#d" x="1100.5" y="794.1"/>
<use href="#d" x="1100.5" y="796.4"/>
<use href="#d" x="1100.5" y="796.4"/>
<use href="#d" x="1100.5" y="796.4"/>
<use href="#d" x="1100.5" y="806.4"/>
<use href="#d" x="1100.5" y="811.4"/>
<use href="#d" x="1100.5" y="808.9"/>
<use href="#d" x="1100.5" y="808.9"/>
<use href="#d" x="1100.5" y="808.9"/>
<use href="#d" x="1100.5" y="808.9"/>
<use href="#d" x="1100.5" y="817.0"/>
<use href="#d" x="1100.5" y="818.4"/>
<use href="#d" x="1100.5" y="820.3"/>
<use href="#d" x="1100.5" y="822.6"/>
<use href="#d" x="1100.5" y="822.6"/>
<use href="#d" x="1100.5" y="822.6"/>
<use href="#d" x="1100.5" y="828.3"/>
<use href="#d" x="1100.5" y="829.7"/>
<use href="#d" x="1100.5" y="833.8"/>
<use href="#d" x="1100.5" y="836.1"/>
<use href="#d" x="1100.5" y="836.1"/>
<use href="#d" x="1100.5" y="836.1"/>
<use href="#d" x="1100.5" y="844.8"/>
<use href="#d" x="1100.5" y="862.2"/>
<use href="#d" x="1100.5" y="869.5"/>
<use href="#d" x="1100.5" y="867.2"/>
<use href="#d" x="1100.5" y="867.2"/>
<use href="#d" x="1100.5" y="867.2"/>
<use href="#d" x="1100.5" y="870.0"/>
<use href="#d" x="1154.3" y="702.2"/>
<use href="#d" x="1154.3" y="714.0"/>
<use href="#d" x="1154.3" y="746.9"/>
<use href="#d" x="1154.3" y="753.2"/>
<use href="#d" x="1154.3" y="772.8"/>
<use href="#d" x="1154.3" y="770.5"/>
<use href="#d" x="1154.3" y="770.5"/>
<use href="#d" x="1154.3" y="770.5"/>
<use href="#d" x="1154.3" y="780.2"/>
<use href="#d" x="1154.3" y="786.5"/>
<use href="#d" x="1154.3" y="789.6"/>
<use href="#d" x="1154.3" y="791.0"/>
<use href="#d" x="1154.3" y="806.5"/>
<use href="#d" x="1154.3" y="804.2"/>
<use href="#d" x="1154.3" y="804.2"/>
<use href="#d" x="1154.3" y="804.2"/>
<use href="#d" x="1154.3" y="812.0"/>
<use href="#d" x="1154.3" y="813.4"/>
<use href="#d" x="1154.3" y="827.0"/>
<use href="#d" x="1154.3" y="824.7"/>
<use href="#d" x="1154.3" y="824.7"/>
<use href="#d" x="1154.3" y="824.7"/>
<use href="#d" x="1154.3" y="829.0"/>
<use href="#d" x="1154.3" y="830.4"/>
<use href="#d" x="1154.3" y="836.1"/>
<use href="#d" x="1154.3" y="841.5"/>
<use href="#d" x="1154.3" y="843.8"/>
<use href="#d" x="1154.3" y="843.8"/>
<use href="#d" x="1154.3" y="843.8"/>
<use href="#d" x="1154.3" y="858.9"/>
<use href="#d" x="1154.3" y="856.6"/>
<use href="#d" x="1154.3" y="856.6"/>
<use href="#d" x="1154.3" y="856.6"/>
<use href="#d" x="1154.3" y="865.1"/>
<use href="#d" x="1154.3" y="866.5"/>
<use href="#d" x="1154.3" y="872.3"/>
<use href="#d" x="1154.3" y="870.0"/>
<use href="#d" x="1154.3" y="870.0"/>
<use href="#d" x="1154.3" y="870.0"/>
<use href="#d" x="1208.2" y="706.5"/>
<use href="#d" x="1208.2" y="712.3"/>
<use href="#d" x="1208.2" y="727.7"/>
<use href="#d" x="1208.2" y="764.4"/>
<use href="#d" x="1208.2" y="766.7"/>
<use href="#d" x="1208.2" y="766.7"/>
<use href="#d" x="1208.2" y="766.7"/>
<use href="#d" x="1208.2" y="778.7"/>
<use href="#d" x="1208.2" y="785.3"/>
<use href="#d" x="1208.2" y="783.0"/>
<use href="#d" x="1208.2" y="783.0"/>
<use href="#d" x="1208.2" y="783.0"/>
<use href="#d" x="1208.2" y="789.9"/>
<use href="#d" x="1208.2" y="792.2"/>
<use href="#d" x="1208.2" y="792.2"/>
<use href="#d" x="1208.2" y="792.2"/>
<use href="#d" x="1208.2" y="798.6"/>
<use href="#d" x="1208.2" y="800.0"/>
<use href="#d" x="1208.2" y="801.4"/>
<use href="#d" x="1208.2" y="802.8"/>
<use href="#d" x="1208.2" y="810.6"/>
<use href="#d" x="1208.2" y="817.8"/>
<use href="#d" x="1208.2" y="815.5"/>
<use href="#d" x="1208.2" y="815.5"/>
<use href="#d" x="1208.2" y="815.5"/>
<use href="#d" x="1208.2" y="829.9"/>
<use href="#d" x="1208.2" y="827.6"/>
<use href="#d" x="1208.2" y="827.6"/>
<use href="#d" x="1208.2" y="827.6"/>
<use href="#d" x="1208.2" y="833.8"/>
<use href="#d" x="1208.2" y="836.1"/>
<use href="#d" x="1208.2" y="836.1"/>
<use href="#d" x="1208.2" y="836.1"/>
<use href="#d" x="1208.2" y="839.6"/>
<use href="#d" x="1208.2" y="841.0"/>
<use href="#d" x="1208.2" y="857.5"/>
<use href="#d" x="1208.2" y="855.2"/>
<use href="#d" x="1208.2" y="855.2"/>
<use href="#d" x="1208.2" y="855.2"/>
<use href="#d" x="1208.2" y="863.0"/>
<use href="#d" x="1208.2" y="866.5"/>
<use href="#d" x="1208.2" y="867.9"/>
<use href="#d" x="1208.2" y="872.2"/>
<use href="#d" x="1208.2" y="873.6"/>
<use href="#d" x="1208.2" y="877.4"/>
<use href="#d" x="1262.1" y="757.0"/>
<use href="#d" x="1262.1" y="760.3"/>
<use href="#d" x="1262.1" y="761.7"/>
<use href="#d" x="1262.1" y="774.7"/>
<use href="#d" x="1262.1" y="772.4"/>
<use href="#d" x="1262.1" y="772.4"/>
<use href="#d" x="1262.1" y="772.4"/>
<use href="#d" x="1262.1" y="776.6"/>
<use href="#d" x="1262.1" y="778.0"/>
<use href="#d" x="1262.1" y="780.9"/>
<use href="#d" x="1262.1" y="782.3"/>
<use href="#d" x="1262.1" y="792.9"/>
<use href="#d" x="1262.1" y="799.6"/>
<use href="#d" x="1262.1" y="804.6"/>
<use href="#d" x="1262.1" y="802.1"/>
<use href="#d" x="1262.1" y="802.1"/>
<use href="#d" x="1262.1" y="802.1"/>
<use href="#d" x="1262.1" y="802.1"/>
<use href="#d" x="1262.1" y="815.0"/>
<use href="#d" x="1262.1" y="812.7"/>
<use href="#d" x="1262.1" y="812.7"/>
<use href="#d" x="1262.1" y="812.7"/>
<use href="#d" x="1262.1" y="819.1"/>
<use href="#d" x="1262.1" y="824.7"/>
<use href="#d" x="1262.1" y="826.1"/>
<use href="#d" x="1262.1" y="836.9"/>
<use href="#d" x="1262.1" y="834.6"/>
<use href="#d" x="1262.1" y="834.6"/>
<use href="#d" x="1262.1" y="834.6"/>
<use href="#d" x="1262.1" y="842.8"/>
<use href="#d" x="1262.1" y="847.8"/>
<use href="#d" x="1262.1" y="845.3"/>
<use href="#d" x="1262.1" y="845.3"/>
<use href="#d" x="1262.1" y="845.3"/>
<use href="#d" x="1262.1" y="845.3"/>
<use href="#d" x="1262.1" y="850.9"/>
<use href="#d" x="1262.1" y="852.3"/>
<use href="#d" x="1262.1" y="858.7"/>
<use href="#d" x="1262.1" y="860.1"/>
<use href="#d" x="1262.1" y="868.6"/>
<use href="#d" x="1262.1" y="870.0"/>
<use href="#d" x="1315.9" y="714.3"/>
<use href="#d" x="1315.9" y="731.0"/>
<use href="#d" x="1315.9" y="748.3"/>
<use href="#d" x="1315.9" y="767.4"/>
<use href="#d" x="1315.9" y="771.8"/>
<use href="#d" x="1315.9" y="769.5"/>
<use href="#d" x="1315.9" y="769.5"/>
<use href="#d" x="1315.9" y="769.5"/>
<use href="#d" x="1315.9" y="776.2"/>
<use href="#d" x="1315.9" y="778.5"/>
<use href="#d" x="1315.9" y="778.5"/>
<use href="#d" x="1315.9" y="778.5"/>
<use href="#d" x="1315.9" y="789.5"/>
<use href="#d" x="1315.9" y="787.2"/>
<use href="#d" x="1315.9" y="787.2"/>
<use href="#d" x="1315.9" y="787.2"/>
<use href="#d" x="1315.9" y="794.1"/>
<use href="#d" x="1315.9" y="796.4"/>
<use href="#d" x="1315.9" y="796.4"/>
<use href="#d" x="1315.9" y="796.4"/>
<use href="#d" x="1315.9" y="806.2"/>
<use href="#d" x="1315.9" y="808.5"/>
<use href="#d" x="1315.9" y="808.5"/>
<use href="#d" x="1315.9" y="808.5"/>
<use href="#d" x="1315.9" y="817.8"/>
<use href="#d" x="1315.9" y="815.5"/>
<use href="#d" x="1315.9" y="815.5"/>
<use href="#d" x="1315.9" y="815.5"/>
<use href="#d" x="1315.9" y="825.5"/>
<use href="#d" x="1315.9" y="826.9"/>
<use href="#d" x="1315.9" y="829.0"/>
<use href="#d" x="1315.9" y="830.4"/>
<use href="#d" x="1315.9" y="833.2"/>
<use href="#d" x="1315.9" y="843.7"/>
<use href="#d" x="1315.9" y="846.0"/>
<use href="#d" x="1315.9" y="846.0"/>
<use href="#d" x="1315.9" y="846.0"/>
<use href="#d" x="1315.9" y="850.2"/>
<use href="#d" x="1315.9" y="851.6"/>
<use href="#d" x="1315.9" y="857.8"/>
<use href="#d" x="1315.9" y="860.1"/>
<use href="#d" x="1315.9" y="860.1"/>
<use href="#d" x="1315.9" y="860.1"/>
<use href="#d" x="1315.9" y="867.4"/>
<use href="#d" x="1315.9" y="865.1"/>
<use href="#d" x="1315.9" y="865.1"/>
<use href="#d" x="1315.9" y="865.1"/>
<use href="#d" x="1315.9" y="870.7"/>
<use href="#d" x="1315.9" y="883.8"/>
<use href="#d" x="1369.8" y="768.1"/>
<use href="#d" x="1369.8" y="777.0"/>
<use href="#d" x="1369.8" y="778.4"/>
<use href="#d" x="1369.8" y="783.7"/>
<use href="#d" x="1369.8" y="798.6"/>
<use href="#d" x="1369.8" y="803.8"/>
<use href="#d" x="1369.8" y="808.8"/>
<use href="#d" x="1369.8" y="806.3"/>
<use href="#d" x="1369.8" y="806.3"/>
<use href="#d" x="1369.8" y="806.3"/>
<use href="#d" x="1369.8" y="806.3"/>
<use href="#d" x="1369.8" y="816.4"/>
<use href="#d" x="1369.8" y="814.1"/>
<use href="#d" x="1369.8" y="814.1"/>
<use href="#d" x="1369.8" y="814.1"/>
<use href="#d" x="1369.8" y="827.0"/>
<use href="#d" x="1369.8" y="824.7"/>
<use href="#d" x="1369.8" y="824.7"/>
<use href="#d" x="1369.8" y="824.7"/>
<use href="#d" x="1369.8" y="831.6"/>
<use href="#d" x="1369.8" y="833.9"/>
<use href="#d" x="1369.8" y="833.9"/>
<use href="#d" x="1369.8" y="833.9"/>
<use href="#d" x="1369.8" y="840.8"/>
<use href="#d" x="1369.8" y="843.1"/>
<use href="#d" x="1369.8" y="843.1"/>
<use href="#d" x="1369.8" y="843.1"/>
<use href="#d" x="1369.8" y="848.8"/>
<use href="#d" x="1369.8" y="850.2"/>
<use href="#d" x="1369.8" y="857.3"/>
<use href="#d" x="1369.8" y="858.7"/>
<use href="#d" x="1369.8" y="871.7"/>
<use href="#d" x="1423.6" y="694.8"/>
<use href="#d" x="1423.6" y="721.0"/>
<use href="#d" x="1423.6" y="732.0"/>
<use href="#d" x="1423.6" y="749.6"/>
<use href="#d" x="1423.6" y="753.8"/>
<use href="#d" x="1423.6" y="758.9"/>
<use href="#d" x="1423.6" y="767.1"/>
<use href="#d" x="1423.6" y="780.0"/>
<use href="#d" x="1423.6" y="782.3"/>
<use href="#d" x="1423.6" y="782.3"/>
<use href="#d" x="1423.6" y="782.3"/>
<use href="#d" x="1423.6" y="785.1"/>
<use href="#d" x="1423.6" y="786.5"/>
<use href="#d" x="1423.6" y="795.9"/>
<use href="#d" x="1423.6" y="793.6"/>
<use href="#d" x="1423.6" y="793.6"/>
<use href="#d" x="1423.6" y="793.6"/>
<use href="#d" x="1423.6" y="799.6"/>
<use href="#d" x="1423.6" y="804.6"/>
<use href="#d" x="1423.6" y="802.1"/>
<use href="#d" x="1423.6" y="802.1"/>
<use href="#d" x="1423.6" y="802.1"/>
<use href="#d" x="1423.6" y="802.1"/>
<use href="#d" x="1423.6" y="809.2"/>
<use href="#d" x="1423.6" y="810.6"/>
<use href="#d" x="1423.6" y="817.0"/>
<use href="#d" x="1423.6" y="818.4"/>
<use href="#d" x="1423.6" y="824.6"/>
<use href="#d" x="1423.6" y="826.9"/>
<use href="#d" x="1423.6" y="826.9"/>
<use href="#d" x="1423.6" y="826.9"/>
<use href="#d" x="1423.6" y="838.0"/>
<use href="#d" x="1423.6" y="840.3"/>
<use href="#d" x="1423.6" y="840.3"/>
<use href="#d" x="1423.6" y="840.3"/>
<use href="#d" x="1423.6" y="846.7"/>
<use href="#d" x="1423.6" y="848.1"/>
<use href="#d" x="1423.6" y="855.9"/>
<use href="#d" x="1423.6" y="858.5"/>
<use href="#d" x="1423.6" y="860.8"/>
<use href="#d" x="1423.6" y="860.8"/>
<use href="#d" x="1423.6" y="860.8"/>
<use href="#d" x="1423.6" y="881.4"/>
<use href="#d" x="1423.6" y="886.3"/>
<use href="#d" x="1423.6" y="887.7"/>
<use href="#d" x="1477.5" y="722.0"/>
<use href="#d" x="1477.5" y="732.8"/>
<use href="#d" x="1477.5" y="758.0"/>
<use href="#d" x="1477.5" y="766.5"/>
<use href="#d" x="1477.5" y="764.2"/>
<use href="#d" x="1477.5" y="764.2"/>
<use href="#d" x="1477.5" y="764.2"/>
<use href="#d" x="1477.5" y="775.9"/>
<use href="#d" x="1477.5" y="777.3"/>
<use href="#d" x="1477.5" y="784.6"/>
<use href="#d" x="1477.5" y="782.3"/>
<use href="#d" x="1477.5" y="782.3"/>
<use href="#d" x="1477.5" y="782.3"/>
<use href="#d" x="1477.5" y="794.3"/>
<use href="#d" x="1477.5" y="795.7"/>
<use href="#d" x="1477.5" y="797.9"/>
<use href="#d" x="1477.5" y="799.3"/>
<use href="#d" x="1477.5" y="812.0"/>
<use href="#d" x="1477.5" y="817.0"/>
<use href="#d" x="1477.5" y="814.5"/>
<use href="#d" x="1477.5" y="814.5"/>
<use href="#d" x="1477.5" y="814.5"/>
<use href="#d" x="1477.5" y="814.5"/>
<use href="#d" x="1477.5" y="821.0"/>
<use href="#d" x="1477.5" y="823.3"/>
<use href="#d" x="1477.5" y="823.3"/>
<use href="#d" x="1477.5" y="823.3"/>
<use href="#d" x="1477.5" y="826.7"/>
<use href="#d" x="1477.5" y="829.0"/>
<use href="#d" x="1477.5" y="829.0"/>
<use href="#d" x="1477.5" y="829.0"/>
<use href="#d" x="1477.5" y="842.6"/>
<use href="#d" x="1477.5" y="840.3"/>
<use href="#d" x="1477.5" y="840.3"/>
<use href="#d" x="1477.5" y="840.3"/>
<use href="#d" x="1477.5" y="848.1"/>
<use href="#d" x="1477.5" y="849.5"/>
<use href="#d" x="1477.5" y="850.7"/>
<use href="#d" x="1477.5" y="853.0"/>
<use href="#d" x="1477.5" y="853.0"/>
<use href="#d" x="1477.5" y="853.0"/>
<use href="#d" x="1477.5" y="867.9"/>
<use href="#d" x="1477.5" y="873.6"/>
<use href="#d" x="1477.5" y="875.0"/>
<use href="#d" x="1477.5" y="887.7"/>
<use href="#d" x="1531.4" y="764.4"/>
<use href="#d" x="1531.4" y="766.7"/>
<use href="#d" x="1531.4" y="766.7"/>
<use href="#d" x="1531.4" y="766.7"/>
<use href="#d" x="1531.4" y="773.1"/>
<use href="#d" x="1531.4" y="774.5"/>
<use href="#d" x="1531.4" y="778.7"/>
<use href="#d" x="1531.4" y="780.1"/>
<use href="#d" x="1531.4" y="785.4"/>
<use href="#d" x="1531.4" y="790.4"/>
<use href="#d" x="1531.4" y="787.9"/>
<use href="#d" x="1531.4" y="787.9"/>
<use href="#d" x="1531.4" y="787.9"/>
<use href="#d" x="1531.4" y="787.9"/>
<use href="#d" x="1531.4" y="798.4"/>
<use href="#d" x="1531.4" y="800.7"/>
<use href="#d" x="1531.4" y="800.7"/>
<use href="#d" x="1531.4" y="800.7"/>
<use href="#d" x="1531.4" y="807.1"/>
<use href="#d" x="1531.4" y="808.5"/>
<use href="#d" x="1531.4" y="812.6"/>
<use href="#d" x="1531.4" y="817.6"/>
<use href="#d" x="1531.4" y="815.1"/>
<use href="#d" x="1531.4" y="815.1"/>
<use href="#d" x="1531.4" y="815.1"/>
<use href="#d" x="1531.4" y="815.1"/>
<use href="#d" x="1531.4" y="831.3"/>
<use href="#d" x="1531.4" y="829.0"/>
<use href="#d" x="1531.4" y="829.0"/>
<use href="#d" x="1531.4" y="829.0"/>
<use href="#d" x="1531.4" y="833.9"/>
<use href="#d" x="1531.4" y="835.3"/>
<use href="#d" x="1531.4" y="838.0"/>
<use href="#d" x="1531.4" y="840.3"/>
<use href="#d" x="1531.4" y="840.3"/>
<use href="#d" x="1531.4" y="840.3"/>
<use href="#d" x="1531.4" y="847.4"/>
<use href="#d" x="1531.4" y="855.7"/>
<use href="#d" x="1531.4" y="858.0"/>
<use href="#d" x="1531.4" y="858.0"/>
<use href="#d" x="1531.4" y="858.0"/>
<use href="#d" x="1531.4" y="866.5"/>
<use href="#d" x="1531.4" y="867.9"/>
<use href="#d" x="1531.4" y="875.0"/>
<use href="#d" x="1531.4" y="876.4"/>
<use href="#d" x="1531.4" y="882.2"/>
<use href="#d" x="1531.4" y="879.9"/>
<use href="#d" x="1531.4" y="879.9"/>
<use href="#d" x="1531.4" y="879.9"/>
<use href="#d" x="1585.2" y="672.9"/>
<use href="#d" x="1585.2" y="700.6"/>
<use href="#d" x="1585.2" y="729.3"/>
<use href="#d" x="1585.2" y="752.3"/>
<use href="#d" x="1585.2" y="757.3"/>
<use href="#d" x="1585.2" y="754.8"/>
<use href="#d" x="1585.2" y="754.8"/>
<use href="#d" x="1585.2" y="754.8"/>
<use href="#d" x="1585.2" y="754.8"/>
<use href="#d" x="1585.2" y="769.5"/>
<use href="#d" x="1585.2" y="777.1"/>
<use href="#d" x="1585.2" y="779.4"/>
<use href="#d" x="1585.2" y="779.4"/>
<use href="#d" x="1585.2" y="779.4"/>
<use href="#d" x="1585.2" y="782.3"/>
<use href="#d" x="1585.2" y="783.7"/>
<use href="#d" x="1585.2" y="790.0"/>
<use href="#d" x="1585.2" y="797.8"/>
<use href="#d" x="1585.2" y="808.6"/>
<use href="#d" x="1585.2" y="806.3"/>
<use href="#d" x="1585.2" y="806.3"/>
<use href="#d" x="1585.2" y="806.3"/>
<use href="#d" x="1585.2" y="809.9"/>
<use href="#d" x="1585.2" y="811.3"/>
<use href="#d" x="1585.2" y="819.6"/>
<use href="#d" x="1585.2" y="821.9"/>
<use href="#d" x="1585.2" y="821.9"/>
<use href="#d" x="1585.2" y="821.9"/>
<use href="#d" x="1585.2" y="825.5"/>
<use href="#d" x="1585.2" y="826.9"/>
<use href="#d" x="1585.2" y="839.1"/>
<use href="#d" x="1585.2" y="836.8"/>
<use href="#d" x="1585.2" y="836.8"/>
<use href="#d" x="1585.2" y="836.8"/>
<use href="#d" x="1585.2" y="847.4"/>
<use href="#d" x="1585.2" y="848.8"/>
<use href="#d" x="1585.2" y="856.6"/>
<use href="#d" x="1585.2" y="861.5"/>
<use href="#d" x="1585.2" y="862.9"/>
<use href="#d" x="1585.2" y="872.2"/>
<use href="#d" x="1585.2" y="884.5"/>
<use href="#d" x="1639.1" y="719.4"/>
<use href="#d" x="1639.1" y="729.8"/>
<use href="#d" x="1639.1" y="737.0"/>
<use href="#d" x="1639.1" y="744.1"/>
<use href="#d" x="1639.1" y="759.3"/>
<use href="#d" x="1639.1" y="757.0"/>
<use href="#d" x="1639.1" y="757.0"/>
<use href="#d" x="1639.1" y="757.0"/>
<use href="#d" x="1639.1" y="765.3"/>
<use href="#d" x="1639.1" y="772.4"/>
<use href="#d" x="1639.1" y="778.6"/>
<use href="#d" x="1639.1" y="783.6"/>
<use href="#d" x="1639.1" y="781.1"/>
<use href="#d" x="1639.1" y="781.1"/>
<use href="#d" x="1639.1" y="781.1"/>
<use href="#d" x="1639.1" y="781.1"/>
<use href="#d" x="1639.1" y="788.6"/>
<use href="#d" x="1639.1" y="796.4"/>
<use href="#d" x="1639.1" y="797.8"/>
<use href="#d" x="1639.1" y="803.7"/>
<use href="#d" x="1639.1" y="801.4"/>
<use href="#d" x="1639.1" y="801.4"/>
<use href="#d" x="1639.1" y="801.4"/>
<use href="#d" x="1639.1" y="804.2"/>
<use href="#d" x="1639.1" y="805.6"/>
<use href="#d" x="1639.1" y="817.8"/>
<use href="#d" x="1639.1" y="815.5"/>
<use href="#d" x="1639.1" y="815.5"/>
<use href="#d" x="1639.1" y="815.5"/>
<use href="#d" x="1639.1" y="827.7"/>
<use href="#d" x="1639.1" y="825.4"/>
<use href="#d" x="1639.1" y="825.4"/>
<use href="#d" x="1639.1" y="825.4"/>
<use href="#d" x="1639.1" y="832.9"/>
<use href="#d" x="1639.1" y="837.9"/>
<use href="#d" x="1639.1" y="835.4"/>
<use href="#d" x="1639.1" y="835.4"/>
<use href="#d" x="1639.1" y="835.4"/>
<use href="#d" x="1639.1" y="835.4"/>
<use href="#d" x="1639.1" y="843.1"/>
<use href="#d" x="1639.1" y="844.5"/>
<use href="#d" x="1639.1" y="851.8"/>
<use href="#d" x="1639.1" y="849.5"/>
<use href="#d" x="1639.1" y="849.5"/>
<use href="#d" x="1639.1" y="849.5"/>
<use href="#d" x="1639.1" y="862.2"/>
<use href="#d" x="1692.9" y="717.6"/>
<use href="#d" x="1692.9" y="766.4"/>
<use href="#d" x="1692.9" y="781.1"/>
<use href="#d" x="1692.9" y="785.8"/>
<use href="#d" x="1692.9" y="787.2"/>
<use href="#d" x="1692.9" y="792.9"/>
<use href="#d" x="1692.9" y="794.3"/>
<use href="#d" x="1692.9" y="795.5"/>
<use href="#d" x="1692.9" y="797.8"/>
<use href="#d" x="1692.9" y="797.8"/>
<use href="#d" x="1692.9" y="797.8"/>
<use href="#d" x="1692.9" y="804.2"/>
<use href="#d" x="1692.9" y="805.6"/>
<use href="#d" x="1692.9" y="807.4"/>
<use href="#d" x="1692.9" y="812.4"/>
<use href="#d" x="1692.9" y="809.9"/>
<use href="#d" x="1692.9" y="809.9"/>
<use href="#d" x="1692.9" y="809.9"/>
<use href="#d" x="1692.9" y="809.9"/>
<use href="#d" x="1692.9" y="816.3"/>
<use href="#d" x="1692.9" y="817.7"/>
<use href="#d" x="1692.9" y="820.8"/>
<use href="#d" x="1692.9" y="825.8"/>
<use href="#d" x="1692.9" y="823.3"/>
<use href="#d" x="1692.9" y="823.3"/>
<use href="#d" x="1692.9" y="823.3"/>
<use href="#d" x="1692.9" y="823.3"/>
<use href="#d" x="1692.9" y="827.4"/>
<use href="#d" x="1692.9" y="829.7"/>
<use href="#d" x="1692.9" y="829.7"/>
<use href="#d" x="1692.9" y="829.7"/>
<use href="#d" x="1692.9" y="840.9"/>
<use href="#d" x="1692.9" y="838.6"/>
<use href="#d" x="1692.9" y="838.6"/>
<use href="#d" x="1692.9" y="838.6"/>
<use href="#d" x="1692.9" y="845.3"/>
<use href="#d" x="1692.9" y="846.7"/>
<use href="#d" x="1692.9" y="850.5"/>
<use href="#d" x="1692.9" y="855.5"/>
<use href="#d" x="1692.9" y="853.0"/>
<use href="#d" x="1692.9" y="853.0"/>
<use href="#d" x="1692.9" y="853.0"/>
<use href="#d" x="1692.9" y="853.0"/>
<use href="#d" x="1692.9" y="858.0"/>
<use href="#d" x="1692.9" y="879.2"/>
<use href="#d" x="1692.9" y="887.7"/>
<use href="#d" x="1692.9" y="889.1"/>
<use href="#d" x="1692.9" y="896.2"/>
<use href="#d" x="1746.8" y="633.2"/>
<use href="#d" x="1746.8" y="633.2"/>
<use href="#d" x="1746.8" y="740.5"/>
<use href="#d" x="1746.8" y="745.5"/>
<use href="#d" x="1746.8" y="743.0"/>
<use href="#d" x="1746.8" y="743.0"/>
<use href="#d" x="1746.8" y="743.0"/>
<use href="#d" x="1746.8" y="743.0"/>
<use href="#d" x="1746.8" y="752.3"/>
<use href="#d" x="1746.8" y="753.7"/>
<use href="#d" x="1746.8" y="758.9"/>
<use href="#d" x="1746.8" y="764.1"/>
<use href="#d" x="1746.8" y="766.4"/>
<use href="#d" x="1746.8" y="766.4"/>
<use href="#d" x="1746.8" y="766.4"/>
<use href="#d" x="1746.8" y="781.5"/>
<use href="#d" x="1746.8" y="779.2"/>
<use href="#d" x="1746.8" y="779.2"/>
<use href="#d" x="1746.8" y="779.2"/>
<use href="#d" x="1746.8" y="786.3"/>
<use href="#d" x="1746.8" y="788.6"/>
<use href="#d" x="1746.8" y="788.6"/>
<use href="#d" x="1746.8" y="788.6"/>
<use href="#d" x="1746.8" y="791.5"/>
<use href="#d" x="1746.8" y="792.9"/>
<use href="#d" x="1746.8" y="800.3"/>
<use href="#d" x="1746.8" y="801.7"/>
<use href="#d" x="1746.8" y="810.4"/>
<use href="#d" x="1746.8" y="812.7"/>
<use href="#d" x="1746.8" y="812.7"/>
<use href="#d" x="1746.8" y="812.7"/>
<use href="#d" x="1746.8" y="828.3"/>
<use href="#d" x="1746.8" y="833.2"/>
<use href="#d" x="1746.8" y="834.6"/>
<use href="#d" x="1746.8" y="840.9"/>
<use href="#d" x="1746.8" y="845.9"/>
<use href="#d" x="1746.8" y="843.4"/>
<use href="#d" x="1746.8" y="843.4"/>
<use href="#d" x="1746.8" y="843.4"/>
<use href="#d" x="1746.8" y="843.4"/>
<use href="#d" x="1746.8" y="848.8"/>
<use href="#d" x="1746.8" y="850.2"/>
<use href="#d" x="1746.8" y="860.8"/>
<use href="#d" x="1746.8" y="867.8"/>
<use href="#d" x="1746.8" y="872.8"/>
<use href="#d" x="1746.8" y="870.3"/>
<use href="#d" x="1746.8" y="870.3"/>
<use href="#d" x="1746.8" y="870.3"/>
<use href="#d" x="1746.8" y="870.3"/>
<use href="#d" x="1746.8" y="884.9"/>
<use href="#d" x="1746.8" y="889.7"/>
<use href="#d" x="1746.8" y="892.0"/>
<use href="#d" x="1746.8" y="892.0"/>
<use href="#d" x="1746.8" y="892.0"/>
<use href="#d" x="1746.8" y="897.6"/>
</svg>
<span class="t" style="left:154.20px;top:117.90px;font-size:24.84px;font-weight:400;letter-spacing:-0.278px;color:#1a1c21;-webkit-text-stroke:0.3px #1a1c21">Time range</span>
<span class="t" style="left:512.90px;top:117.90px;font-size:24.84px;font-weight:400;letter-spacing:-0.210px;color:#1a1c21;-webkit-text-stroke:0.3px #1a1c21">Pick fields</span>
<span class="t" style="left:862.40px;top:117.90px;font-size:24.84px;font-weight:400;letter-spacing:-0.060px;color:#4a5265;-webkit-text-stroke:0.3px #4a5265">Job details</span>
<span class="t" style="left:1221.60px;top:117.90px;font-size:24.84px;font-weight:400;letter-spacing:-0.222px;color:#4a5265;-webkit-text-stroke:0.3px #4a5265">Validation</span>
<span class="t" style="left:1575.70px;top:117.90px;font-size:24.84px;font-weight:400;letter-spacing:-0.583px;color:#4a5265;-webkit-text-stroke:0.3px #4a5265">Summary</span>
<h1 class="t" style="left:37.40px;top:179.80px;font-size:31.05px;font-weight:500;letter-spacing:-0.040px;color:#1a1c21;-webkit-text-stroke:0.65px #1a1c21">Pick fields</h1>
<h3 class="t" style="left:38.20px;top:261.80px;font-size:24.00px;font-weight:700;letter-spacing:-0.414px;color:#1a1c21">Population field</h3>
<p class="t" style="left:38.60px;top:307.70px;font-size:21.73px;font-weight:400;letter-spacing:0.218px;color:#4f5768;-webkit-text-stroke:0.25px #4f5768">All values in the selected field will be modeled together as</p>
<p class="t" style="left:39.20px;top:337.60px;font-size:21.73px;font-weight:400;letter-spacing:0.161px;color:#4f5768;-webkit-text-stroke:0.25px #4f5768">a population. This analysis type is recommended for high</p>
<p class="t" style="left:39.20px;top:367.60px;font-size:21.73px;font-weight:400;letter-spacing:0.219px;color:#4f5768;-webkit-text-stroke:0.25px #4f5768">cardinality data.</p>
<label class="t" style="left:656.80px;top:281.90px;font-size:18.00px;font-weight:700;letter-spacing:-0.147px;color:#1a1c21">Population field</label>
<span class="t" style="left:674.80px;top:327.80px;font-size:21.73px;font-weight:400;letter-spacing:0.357px;color:#2b2e38;-webkit-text-stroke:0.2px #2b2e38">clientip</span>
<span class="t" style="left:38.20px;top:467.80px;font-size:19.35px;font-weight:400;letter-spacing:0.750px;color:#2b2e38;-webkit-text-stroke:0.2px #2b2e38">Mean(bytes)</span>
<span class="t" style="left:1173.80px;top:488.00px;font-size:21.73px;font-weight:400;letter-spacing:0.201px;color:#8590a6;-webkit-text-stroke:0.2px #8590a6">Split data</span>
<label class="t" style="left:38.20px;top:1013.90px;font-size:18.00px;font-weight:700;letter-spacing:0.123px;color:#1a1c21">Add metric</label>
<h3 class="t" style="left:38.10px;top:1177.80px;font-size:24.00px;font-weight:700;letter-spacing:-0.490px;color:#1a1c21">Bucket span</h3>
<p class="t" style="left:38.00px;top:1223.60px;font-size:21.73px;font-weight:400;letter-spacing:0.210px;color:#4f5768;-webkit-text-stroke:0.25px #4f5768">Set the interval for time series analysis,</p>
<p class="t" style="left:39.00px;top:1253.60px;font-size:21.73px;font-weight:400;letter-spacing:0.107px;color:#4f5768;-webkit-text-stroke:0.25px #4f5768">typically between 15m to 1h.</p>
<label class="t" style="left:483.00px;top:1199.90px;font-size:18.00px;font-weight:700;letter-spacing:-0.170px;color:#1a1c21">Bucket span</label>
<span class="t" style="left:500.40px;top:1246.20px;font-size:21.73px;font-weight:400;letter-spacing:-1.100px;color:#2b2e38;-webkit-text-stroke:0.2px #2b2e38">15m</span>
<span class="t" style="left:629.00px;top:1244.20px;font-size:24.84px;font-weight:400;letter-spacing:0.258px;color:#0a50a4;-webkit-text-stroke:0.45px #0a50a4">Estimate bucket span</span>
<h3 class="t" style="left:951.00px;top:1177.80px;font-size:24.00px;font-weight:700;letter-spacing:-0.130px;color:#1a1c21">Influencers</h3>
<p class="t" style="left:951.00px;top:1223.70px;font-size:21.73px;font-weight:400;letter-spacing:0.237px;color:#4f5768;-webkit-text-stroke:0.25px #4f5768">Select which categorical fields have</p>
<p class="t" style="left:951.00px;top:1253.60px;font-size:21.73px;font-weight:400;letter-spacing:0.267px;color:#4f5768;-webkit-text-stroke:0.25px #4f5768">influence on the results. Who/what might</p>
<p class="t" style="left:952.00px;top:1283.60px;font-size:21.73px;font-weight:400;letter-spacing:-0.018px;color:#4f5768;-webkit-text-stroke:0.25px #4f5768">you 'blame' for an anomaly? Recommend</p>
<p class="t" style="left:952.00px;top:1313.60px;font-size:21.73px;font-weight:400;letter-spacing:0.161px;color:#4f5768;-webkit-text-stroke:0.25px #4f5768">1-3 influencers.</p>
<label class="t" style="left:1396.50px;top:1199.90px;font-size:18.00px;font-weight:700;letter-spacing:-0.020px;color:#1a1c21">Influencers</label>
<span class="t" style="left:1421.90px;top:1246.50px;font-size:18.63px;font-weight:400;letter-spacing:0.386px;color:#2b2e38;-webkit-text-stroke:0.2px #2b2e38">clientip</span>
</div></body></html>
